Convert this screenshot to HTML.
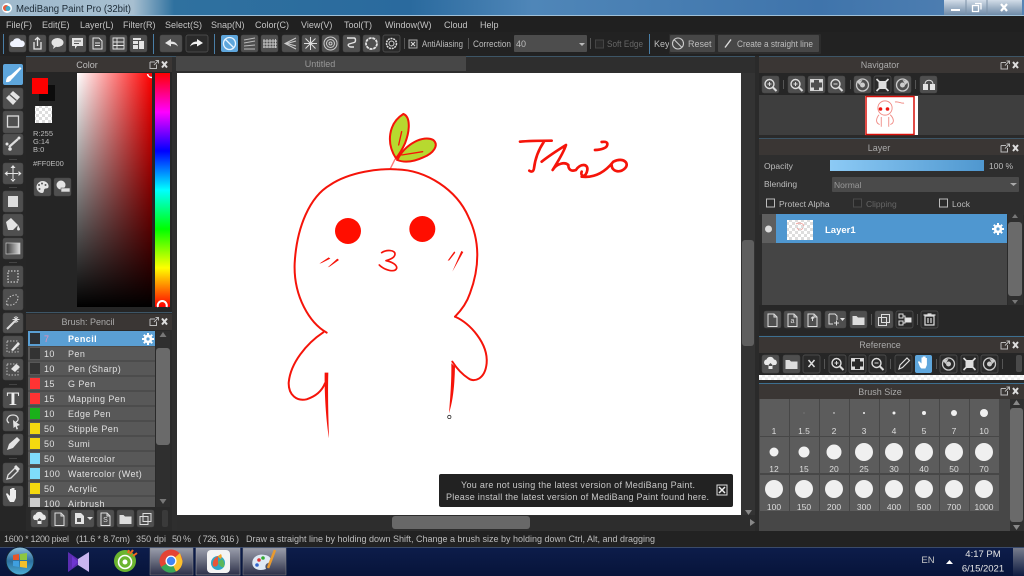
<!DOCTYPE html>
<html><head><meta charset="utf-8"><style>
html,body{margin:0;padding:0;background:#222;width:1024px;height:576px;overflow:hidden}
svg{display:block}
text{font-family:"Liberation Sans",sans-serif;font-size:9px;fill:#bdbdbd}
.m{text-anchor:middle}
.b{fill:#4f4f4f;stroke:#444;stroke-width:.5}
.d{fill:#2a2a2a;stroke:#555;stroke-width:.7}
.h{fill:#3a3634}
.i{fill:#e4e4e4}
.s{fill:none;stroke:#e4e4e4;stroke-width:1.4}
.sep{stroke:#555;stroke-width:1}
.bl{stroke:#4a7ea6;stroke-width:1}
.r{fill:none;stroke:#f5140a;stroke-width:6;stroke-linecap:round;stroke-linejoin:round}
.t{fill:#f5140a}
.row{fill:#585858}
.cell{fill:#5c5c5c}
.n{fill:#ddd;font-size:8.5px;text-anchor:middle}
.mn{font-size:9px;fill:#c4c4c4}
</style></head><body>
<svg width="1024" height="576" viewBox="0 0 1024 576" xmlns="http://www.w3.org/2000/svg">
<defs>
<linearGradient id="tb" x1="0" x2="1" y1="0" y2="0"><stop offset="0" stop-color="#9fb9cc"/><stop offset=".13" stop-color="#a7bfd0"/><stop offset=".17" stop-color="#2f719f"/><stop offset=".4" stop-color="#2a6a9e"/><stop offset=".52" stop-color="#4f86b8"/><stop offset=".8" stop-color="#3f74ab"/><stop offset="1" stop-color="#5583b4"/></linearGradient>
<linearGradient id="sv" x1="0" x2="1" y1="0" y2="0"><stop offset="0" stop-color="#fff"/><stop offset="1" stop-color="#f00"/></linearGradient>
<linearGradient id="sk" x1="0" x2="0" y1="0" y2="1"><stop offset="0" stop-color="#000" stop-opacity="0"/><stop offset="1" stop-color="#000"/></linearGradient>
<linearGradient id="hue" x1="0" x2="0" y1="0" y2="1"><stop offset="0" stop-color="#f00"/><stop offset=".167" stop-color="#f0f"/><stop offset=".333" stop-color="#00f"/><stop offset=".5" stop-color="#0ff"/><stop offset=".667" stop-color="#0f0"/><stop offset=".833" stop-color="#ff0"/><stop offset="1" stop-color="#f00"/></linearGradient>
<linearGradient id="op" x1="0" x2="1" y1="0" y2="0"><stop offset="0" stop-color="#8ccaf5"/><stop offset="1" stop-color="#4f97cf"/></linearGradient>
<linearGradient id="gr" x1="0" x2="1" y1="0" y2="0"><stop offset="0" stop-color="#333"/><stop offset="1" stop-color="#ddd"/></linearGradient>
<linearGradient id="task" x1="0" x2="0" y1="0" y2="1"><stop offset="0" stop-color="#0d1d4b"/><stop offset="1" stop-color="#07143a"/></linearGradient>
<linearGradient id="tbtn" x1="0" x2="0" y1="0" y2="1"><stop offset="0" stop-color="#9a9dab"/><stop offset=".5" stop-color="#666a7c"/><stop offset="1" stop-color="#2c2f48"/></linearGradient>
<linearGradient id="wbtn" x1="0" x2="0" y1="0" y2="1"><stop offset="0" stop-color="#d2dde8"/><stop offset=".5" stop-color="#9fb2c6"/><stop offset="1" stop-color="#6f8ba8"/></linearGradient>
<linearGradient id="orb" x1="0" x2="0" y1="0" y2="1"><stop offset="0" stop-color="#8fc0dd"/><stop offset=".5" stop-color="#2c6f9e"/><stop offset="1" stop-color="#4db0d8"/></linearGradient>
<linearGradient id="sd" x1="0" x2="0" y1="0" y2="1"><stop offset="0" stop-color="#777c8c"/><stop offset="1" stop-color="#0d1a40"/></linearGradient>
<pattern id="chk" width="6" height="6" patternUnits="userSpaceOnUse"><rect width="6" height="6" fill="#fff"/><rect width="3" height="3" fill="#ddd"/><rect x="3" y="3" width="3" height="3" fill="#ddd"/></pattern>
<pattern id="chk2" width="6" height="5" patternUnits="userSpaceOnUse"><rect width="6" height="5" fill="#fff"/><rect width="3" height="2.500" fill="#eee"/><rect x="3" y="2.500" width="3" height="2.500" fill="#eee"/></pattern>
<clipPath id="listclip"><rect x="28" y="331" width="127" height="176"/></clipPath>
<symbol id="pop" viewBox="0 0 20 10" width="20" height="10"><path d="M1 2.500h5M1 2.500v6.500h6.500v-4M5 5.500L9 1.500M6.500 1h3v3" fill="none" stroke="#bbb" stroke-width="1"/><path d="M13 2l5 6M18 2l-5 6" stroke="#ddd" stroke-width="2"/></symbol>
<symbol id="zi" viewBox="0 0 18 18" width="18" height="18"><circle cx="8" cy="8" r="4.500" fill="none" stroke="#ddd" stroke-width="1.400"/><path d="M11 11l4 4" stroke="#ddd" stroke-width="2"/><path d="M6 8h4M8 6v4" stroke="#ddd"/></symbol>
<symbol id="zo" viewBox="0 0 18 18" width="18" height="18"><circle cx="8" cy="8" r="4.500" fill="none" stroke="#ddd" stroke-width="1.400"/><path d="M11 11l4 4" stroke="#ddd" stroke-width="2"/><path d="M6 8h4" stroke="#ddd"/></symbol>
<symbol id="fit" viewBox="0 0 18 18" width="18" height="18"><rect x="3" y="3.500" width="12" height="11" fill="none" stroke="#ccc"/><path d="M3 3.500h3.500v3H3zM11.500 3.500H15v3h-3.500zM3 11.500h3.500v3H3zM11.500 11.500H15v3h-3.500z" fill="#ddd"/></symbol>
<symbol id="rl" viewBox="0 0 18 18" width="18" height="18"><circle cx="9" cy="9" r="6" fill="none" stroke="#ccc" stroke-width="1.300"/><circle cx="9" cy="9" r="2.500" fill="#ccc"/><path d="M3 5l3 4 3-5z" fill="#ccc"/></symbol>
<symbol id="rr" viewBox="0 0 18 18" width="18" height="18"><circle cx="9" cy="9" r="6" fill="none" stroke="#ccc" stroke-width="1.300"/><circle cx="9" cy="9" r="2.500" fill="#ccc"/><path d="M15 5l-3 4-3-5z" fill="#ccc"/></symbol>
<symbol id="fr" viewBox="0 0 18 18" width="18" height="18"><rect x="5" y="5" width="8" height="8" fill="#ddd"/><path d="M3 3l3 3M15 3l-3 3M3 15l3-3M15 15l-3-3" stroke="#ddd" stroke-width="1.600"/></symbol>
<symbol id="doc" viewBox="0 0 18 18" width="18" height="18"><path d="M4.500 3h6l3 3v9.500h-9z" fill="none" stroke="#ddd" stroke-width="1"/><path d="M10.500 3v3h3" fill="none" stroke="#ddd"/></symbol>
<symbol id="fold" viewBox="0 0 18 18" width="18" height="18"><path d="M3 5h4l1.500 1.500H15V14H3z" fill="#ddd"/></symbol>
<symbol id="cp" viewBox="0 0 18 18" width="18" height="18"><path d="M6.500 3.500h8v8h-8zM3.500 6.500h8v8h-8z" fill="none" stroke="#ddd"/></symbol>
<symbol id="cl" viewBox="0 0 18 18" width="18" height="18"><path d="M4 10a3 3 0 0 1 1-5.500 4 4 0 0 1 7.500 0 3 3 0 0 1 1.500 5.500h-3v4H7v-4zM9 8l-3 3h6z" fill="#e8e8e8"/></symbol>
<symbol id="gear" viewBox="0 0 14 14" width="14" height="14"><circle cx="7" cy="7" r="4.200" fill="#fff"/><path d="M7 1v12M1 7h12M2.800 2.800l8.400 8.400M11.200 2.800l-8.400 8.400" stroke="#fff" stroke-width="2"/><circle cx="7" cy="7" r="1.600" fill="#5a9fd4"/></symbol>
</defs>

<rect width="1024" height="576" fill="#242424"/>

<!-- title bar -->
<rect width="1024" height="15" fill="url(#tb)"/>
<rect y="15" width="1024" height="1" fill="#9fc0d8"/>
<circle cx="7" cy="8" r="5" fill="#fff"/><circle cx="6" cy="8" r="3" fill="#e85a3a"/><circle cx="8" cy="8.500" r="2.500" fill="#3fa9c9"/>
<text x="16" y="12" textLength="115" lengthAdjust="spacingAndGlyphs" style="font-size:10px;fill:#1c2a36">MediBang Paint Pro (32bit)</text>
<rect x="944" y="0" width="78" height="15" fill="url(#wbtn)"/>
<path d="M966 0v15M987 0v15" stroke="#7d92a8"/>
<rect x="951" y="9" width="9" height="2" fill="#fff"/>
<path d="M972.500 5.500h6v6h-6zM975 3.500h6v6" fill="none" stroke="#fff" stroke-width="1.300"/>
<path d="M1001 4l6 7M1007 4l-6 7" stroke="#fff" stroke-width="2.200"/>

<!-- menu -->
<rect y="16" width="1024" height="16" fill="#202020"/>
<text class="mn" x="6" y="28">File(F)</text><text class="mn" x="42" y="28">Edit(E)</text><text class="mn" x="80" y="28">Layer(L)</text><text class="mn" x="123" y="28">Filter(R)</text><text class="mn" x="165" y="28">Select(S)</text><text class="mn" x="211" y="28">Snap(N)</text><text class="mn" x="255" y="28">Color(C)</text><text class="mn" x="301" y="28">View(V)</text><text class="mn" x="344" y="28">Tool(T)</text><text class="mn" x="385" y="28">Window(W)</text><text class="mn" x="444" y="28">Cloud</text><text class="mn" x="480" y="28">Help</text>

<!-- toolbar -->
<rect y="32" width="1024" height="24" fill="#222"/>
<path class="bl" d="M3.500 34v20M153.500 34v20M214.500 34v20M649.500 34v20"/>
<rect class="b" x="9" y="35" width="17" height="17" rx="2"/><path d="M13 47a3 3 0 0 1 0-6 4.500 4.500 0 0 1 8-.5 3.200 3.200 0 0 1 1 6.500z" fill="#f0f4ff"/>
<rect class="b" x="29" y="35" width="17" height="17" rx="2"/><path d="M34 42v7h7v-7M37.500 46v-8M35 40l2.500-2.500L40 40" fill="none" stroke="#e4e4e4" stroke-width="1.300"/>
<rect class="b" x="49" y="35" width="17" height="17" rx="2"/><ellipse cx="57.500" cy="42.500" rx="6" ry="4.500" class="i"/><path d="M54 45l-1 4 4-3z" class="i"/>
<rect class="b" x="69" y="35" width="17" height="17" rx="2"/><path d="M72 38h11v8h-6l-2 3v-3h-3z" class="i"/><path d="M74 41h7M74 43.500h5" stroke="#555"/>
<rect class="b" x="89" y="35" width="17" height="17" rx="2"/><path d="M93 38h6l3 3v8h-9zM95 43h5M95 45.500h5" class="s" style="stroke-width:1"/>
<rect class="b" x="110" y="35" width="17" height="17" rx="2"/><path d="M113 38h11v11h-11zM113 42h11M113 45.500h11M117 38v11" class="s" style="stroke-width:.9"/>
<rect class="b" x="130" y="35" width="17" height="17" rx="2"/><path d="M133 41h5v3h-5zM133 45h5v4h-5zM139 41h5v8h-5zM133 38h8v2h-8z" class="i"/>
<rect class="b" x="160" y="35" width="22" height="17" rx="2"/><path d="M165 43l6-4v2.500c4 0 6 2 7 5-2-2-4-2.500-7-2.500v2.500z" class="i"/>
<rect class="d" x="186" y="35" width="22" height="17" rx="2"/><path d="M203 43l-6-4v2.500c-4 0-6 2-7 5 2-2 4-2.500 7-2.500v2.500z" fill="#f2f2f2"/>
<rect x="221" y="35" width="17" height="17" rx="2" fill="#5ea6dc"/><circle cx="229.500" cy="43.500" r="6" fill="none" stroke="#e8f4ff" stroke-width="1.300"/><path d="M225 39l9 9" stroke="#e8f4ff" stroke-width="1.300"/>
<rect class="b" x="241" y="35" width="17" height="17" rx="2"/><path d="M244 40l11-2M244 43l11-2M244 46l11-1M244 49l11 0" stroke="#bbb"/>
<rect class="b" x="261" y="35" width="17" height="17" rx="2"/><path d="M264 39v9M267 39v9M270 39v9M273 39v9M275.500 39v9M263 41h14M263 44h14M263 47h14" stroke="#ccc" stroke-width=".9"/>
<rect class="b" x="282" y="35" width="17" height="17" rx="2"/><path d="M296 38l-11 5.500 11 5.500M296 41l-9 2.500 9 2.500" fill="none" stroke="#ccc"/>
<rect class="b" x="302" y="35" width="17" height="17" rx="2"/><path d="M310.500 37v13M304 43.500h13M305.500 38.500l10 10M315.500 38.500l-10 10" stroke="#ddd"/>
<rect class="b" x="322" y="35" width="17" height="17" rx="2"/><circle cx="330.500" cy="43.500" r="6.500" fill="none" stroke="#ccc"/><circle cx="330.500" cy="43.500" r="4" fill="none" stroke="#ccc"/><circle cx="330.500" cy="43.500" r="1.500" fill="none" stroke="#ccc"/>
<rect class="b" x="343" y="35" width="17" height="17" rx="2"/><path d="M347 38h7c2 0 2 4 0 4.500l-5 1.500c-2 1 0 3 2 3h3" class="s"/>
<rect class="b" x="363" y="35" width="17" height="17" rx="2"/><circle cx="371.500" cy="43.500" r="5.500" fill="none" stroke="#e4e4e4" stroke-width="1.800" stroke-dasharray="3 .8"/>
<rect class="d" x="383" y="35" width="17" height="17" rx="2"/><circle cx="391.500" cy="43.500" r="5" fill="none" stroke="#ddd" stroke-width="1.500" stroke-dasharray="2 .8"/><circle cx="391.500" cy="43.500" r="2.500" fill="none" stroke="#ddd"/>
<path class="sep" d="M404.500 38v11M468.500 38v11M590.500 38v11"/>
<rect x="409" y="40" width="8" height="8" fill="#333" stroke="#aaa"/><path d="M411 42l4 4M415 42l-4 4" stroke="#ddd"/>
<text x="422" y="47" textLength="41" lengthAdjust="spacingAndGlyphs" style="font-size:9px">AntiAliasing</text>
<text x="473" y="47" textLength="38" lengthAdjust="spacingAndGlyphs" style="font-size:9px">Correction</text>
<rect x="514" y="35" width="73" height="17" rx="1" fill="#4d4d4d"/><text x="516" y="47" style="font-size:9px">40</text><path d="M579 43h6l-3 3z" fill="#bbb"/>
<rect x="595.500" y="40" width="8" height="8" fill="#2a2a2a" stroke="#444"/>
<text x="607" y="47" textLength="36" lengthAdjust="spacingAndGlyphs" style="font-size:9px;fill:#666">Soft Edge</text>
<text x="654" y="47" style="font-size:9px">Key</text>
<rect x="669" y="34" width="152" height="20" rx="1" fill="#2c2c2c"/>
<rect x="670" y="35" width="45" height="17" rx="1" fill="#474747"/><circle cx="678" cy="43.500" r="5.500" fill="none" stroke="#ccc" stroke-width="1.100"/><path d="M674 39.500l8 8" stroke="#ccc" stroke-width="1.100"/><text x="688" y="47" style="font-size:9px">Reset</text>
<rect x="718" y="35" width="101" height="17" rx="1" fill="#474747"/><path d="M725 47.500l6-8" stroke="#ddd" stroke-width="1.400"/><text x="737" y="47" textLength="76" lengthAdjust="spacingAndGlyphs" style="font-size:9px">Create a straight line</text>

<!-- workspace -->
<rect x="172" y="56" width="587" height="475" fill="#2e2e2e"/>
<rect x="172" y="56" width="587" height="1" fill="#3d5566"/>
<rect x="176" y="56" width="290" height="15" fill="#474747"/>
<text x="320" y="67" class="m" style="font-size:9px;fill:#999">Untitled</text>
<rect x="177" y="73" width="564" height="442" fill="#fff"/>
<rect x="741" y="73" width="14" height="442" fill="#333"/><rect x="742" y="240" width="12" height="106" rx="3" fill="#5f5f5f"/><path d="M745 510h7l-3.500 5z" fill="#888"/>
<rect x="177" y="515" width="578" height="15" fill="#2d2d2d"/><rect x="392" y="516" width="138" height="13" rx="3" fill="#686868"/><path d="M750 519v7l5-3.500z" fill="#888"/>

<!-- drawing -->
<g transform="translate(280 100) scale(.3333)">
<path d="M348 175C318 130 325 70 370 42C392 50 390 92 375 130C366 150 356 165 348 175Z" fill="#b7d92f" stroke="#f5140a" stroke-width="6"/>
<path d="M352 180C375 132 430 104 460 120C478 136 460 160 430 172C400 186 372 188 352 180Z" fill="#b7d92f" stroke="#f5140a" stroke-width="6"/>
<path class="r" style="stroke-width:4" d="M356 135L365 95M365 165L428 155"/>
<path class="r" style="stroke-width:4;stroke:#f77" d="M345 178L330 208"/>
<path class="r" d="M140 698C90 670 40 590 44 490C50 380 90 290 150 255C210 215 300 205 350 208C440 210 530 270 565 350C600 420 600 500 570 580C560 610 545 630 525 650"/>
<path class="r" d="M525 650C570 670 625 730 620 790C615 840 580 848 565 835C545 822 530 805 517 785"/>
<path class="r" d="M130 697C80 730 30 790 26 850C26 885 50 905 80 898C105 890 125 875 135 850"/>
<path class="t" d="M134 818L145 818C143 880 145 950 147 1015C138 960 133 880 134 818Z"/>
<path class="t" d="M514 790L525 800C524 850 520 900 507 940C511 890 515 840 514 790Z"/>
<circle cx="508" cy="951" r="5" fill="#fff" stroke="#333" stroke-width="2.500"/>
<circle cx="204" cy="393" r="39" fill="#ff0e00"/><circle cx="427" cy="387" r="39" fill="#ff0e00"/>
<path class="r" style="stroke-width:5" d="M305 458C320 448 345 450 345 462C345 475 325 480 318 482C335 485 352 495 350 505C345 518 315 512 298 495"/>
<path class="t" d="M118 491L146 472L151 476L125 489ZM143 502L172 476L177 480L150 499Z"/>
<path class="t" d="M503 482L523 454L526 458L508 481ZM517 515L544 453L550 456L524 503Z"/>
</g>
<g transform="translate(500 120) scale(.3333)">
<path class="r" style="stroke-width:8" d="M60 65C90 62 130 62 155 62M132 65C115 90 105 120 102 145C100 158 92 155 88 152M125 125C150 105 190 80 198 75C190 100 170 130 158 150C170 130 195 125 205 135C205 150 215 155 228 150C240 130 265 130 262 150C258 175 240 170 245 155M245 170C290 175 320 150 340 125C370 110 390 130 375 145C360 160 335 155 335 135M285 90C300 90 325 85 322 70C320 65 312 65 305 66"/>
</g>

<!-- notification -->
<rect x="439" y="474" width="294" height="33" rx="2" fill="#222"/>
<text x="461" y="488" textLength="234" lengthAdjust="spacing" style="font-size:9px;fill:#c8c8c8">You are not using the latest version of MediBang Paint.</text>
<text x="446" y="500" textLength="263" lengthAdjust="spacing" style="font-size:9px;fill:#c8c8c8">Please install the latest version of MediBang Paint found here.</text>
<rect x="717" y="485" width="10" height="10" fill="#222" stroke="#ddd"/><path d="M719 487l6 6M725 487l-6 6" stroke="#eee" stroke-width="1.500"/>

<!-- left tools -->
<rect x="0" y="56" width="26" height="475" fill="#262626"/>
<rect x="3" y="64" width="20" height="21" rx="2" fill="#5ea6dc"/><path d="M6 82c0-3 1-5 3-6l2-1 9-8 1.500 1.500-8 9-2 2c-1 2-3 3-5.500 2.500z" fill="#fff"/>
<rect class="b" x="3" y="88" width="20" height="21" rx="2"/><path d="M6 98l7-7 7 6-7 8z" class="i"/><path d="M9.500 94.500l7 6" stroke="#555" stroke-width="1.200"/>
<rect class="b" x="3" y="111" width="20" height="22" rx="2"/><rect x="7.500" y="116" width="11" height="11" fill="none" stroke="#ddd" stroke-width="1.300"/>
<rect class="b" x="3" y="134" width="20" height="21" rx="2"/><path d="M9 147l9-8" fill="none" stroke="#ddd" stroke-width="2.200"/><circle cx="7" cy="144" r="1.500" class="i"/><circle cx="10" cy="149" r="1.800" class="i"/><circle cx="19" cy="138" r="1.500" class="i"/>
<path d="M9 159.500h8M9 187.500h8M9 262.500h8M9 384.500h8M9 458.500h8" stroke="#444"/>
<rect class="b" x="3" y="163" width="20" height="21" rx="2"/><path d="M13 165l2.500 3h-5zM13 182l2.500-3h-5zM4.500 173.500l3-2.500v5zM21.500 173.500l-3-2.500v5zM7 173h12v1H7zM12.500 167h1v13h-1z" class="i"/>
<rect class="b" x="3" y="191" width="20" height="21" rx="2"/><rect x="8" y="196" width="10" height="11" fill="#ddd"/>
<rect class="b" x="3" y="214" width="20" height="22" rx="2"/><path d="M6 222l5-4 7 7-5 5h-5zM18 225l2 4a1.500 1.500 0 0 1-3 0z" class="i"/>
<rect class="b" x="3" y="238" width="20" height="21" rx="2"/><rect x="6" y="243" width="14" height="11" fill="url(#gr)" stroke="#ccc" stroke-width=".7"/>
<rect class="b" x="3" y="266" width="20" height="21" rx="2"/><rect x="8" y="271" width="10" height="11" fill="none" stroke="#ccc" stroke-width="1.300" stroke-dasharray="1.500 1.500"/>
<rect class="b" x="3" y="289" width="20" height="21" rx="2"/><path d="M7 305c-2-5 4-11 10-10 3 3-1 10-6 10z" fill="none" stroke="#ccc" stroke-width="1" stroke-dasharray="1.500 1.500"/>
<rect class="b" x="3" y="313" width="20" height="20" rx="2"/><path d="M7 329l8-8" stroke="#ddd" stroke-width="2"/><path d="M16 316v7M12.500 319.500h7M14 317l4 5M18 317l-4 5" stroke="#ddd"/>
<rect class="b" x="3" y="336" width="20" height="21" rx="2"/><rect x="7" y="341" width="11" height="11" fill="none" stroke="#bbb" stroke-dasharray="1.500 1.500"/><path d="M11 350l7-8 2 2-7 7z" class="i"/>
<rect class="b" x="3" y="359" width="20" height="21" rx="2"/><rect x="7" y="364" width="11" height="11" fill="none" stroke="#bbb" stroke-dasharray="1.500 1.500"/><path d="M11 369l5-5 4 3-5 5z" class="i"/>
<rect class="b" x="3" y="388" width="20" height="20" rx="2"/><text x="13" y="405" class="m" style="font-family:'Liberation Serif',serif;font-size:19px;font-weight:bold;fill:#eee">T</text>
<rect class="b" x="3" y="411" width="20" height="20" rx="2"/><path d="M9 423c-4-3-1-8 4-8s7 5 3 7" fill="none" stroke="#ddd" stroke-width="1.300"/><path d="M13 420l7 5-3 1 1 3-1.500.5-1-3-2 1.500z" class="i"/>
<rect class="b" x="3" y="434" width="20" height="21" rx="2"/><path d="M7 450l2-6 8-7 3 3-7 8z" class="i"/>
<rect class="b" x="3" y="463" width="20" height="20" rx="2"/><path d="M7 479l1-4 7-7 3 3-7 7z" fill="none" stroke="#ddd" stroke-width="1.300"/><path d="M14 467l2-2 4 4-2 2z" class="i"/>
<rect class="b" x="3" y="486" width="20" height="20" rx="2"/><path d="M8 499l-2-5 1-1 3 3v-7h1.500v5-6h1.500v6-6h1.500v6-4h1.500v8l-2 4h-4z" fill="#eee"/>

<!-- color panel -->
<rect x="26" y="56" width="146" height="256" fill="#252525"/>
<rect x="26" y="56" width="146" height="1" fill="#3d5566"/>
<rect class="h" x="26" y="57" width="146" height="15"/>
<text x="87" y="68" class="m" style="font-size:9px">Color</text>
<use href="#pop" x="149" y="59.500"/>
<rect x="39" y="85" width="16" height="16" fill="#0c0c0c"/>
<rect x="32" y="78" width="16" height="16" fill="#f00"/>
<rect x="35" y="106" width="17" height="17" fill="url(#chk)"/>
<text x="33" y="136" style="font-size:7.500px">R:255</text><text x="33" y="144" style="font-size:7.500px">G:14</text><text x="33" y="152" style="font-size:7.500px">B:0</text>
<text x="33" y="166" style="font-size:7.500px">#FF0E00</text>
<rect class="b" x="34" y="178" width="17" height="18" rx="2"/><path d="M42.500 181c4 0 6.500 3 6 6-.5 2-3 1-4 2s0 4-2.500 4c-3 0-5.500-3-5.500-6s3-6 6-6z" class="i"/><circle cx="39" cy="185" r="1" fill="#555"/><circle cx="42" cy="183.500" r="1" fill="#555"/><circle cx="45.500" cy="185" r="1" fill="#555"/><circle cx="39.500" cy="189" r="1" fill="#555"/>
<rect class="b" x="54" y="178" width="17" height="18" rx="2"/><circle cx="61" cy="185" r="4.500" class="i"/><rect x="61" y="188" width="9" height="4" fill="#ddd" stroke="#555" stroke-width=".6"/>
<rect x="77" y="73" width="75" height="234" fill="url(#sv)"/>
<rect x="77" y="73" width="75" height="234" fill="url(#sk)"/>
<rect x="155" y="73" width="15" height="234" fill="url(#hue)"/>
<path d="M147.500 74a4.500 4.500 0 0 0 4.500 3.500" fill="none" stroke="#fff" stroke-width="1.500"/>
<path d="M158 307a4.500 4.500 0 1 1 8.500 0" fill="none" stroke="#fff" stroke-width="2"/>

<!-- brush panel -->
<rect x="26" y="312" width="146" height="219" fill="#2a2a2a"/>
<rect x="26" y="312" width="146" height="1" fill="#3d5566"/>
<rect class="h" x="26" y="314" width="146" height="16"/>
<text x="88" y="325" class="m" style="font-size:9px;fill:#aaa">Brush: Pencil</text>
<use href="#pop" x="149" y="316.500"/>
<rect x="28" y="331" width="127" height="176" fill="#3f3f3f"/>
<g clip-path="url(#listclip)">
<rect x="28" y="331" width="127" height="15" fill="#5a9fd4"/>
<rect class="row" x="28" y="346.500" width="127" height="14"/>
<rect class="row" x="28" y="361.500" width="127" height="14"/>
<rect class="row" x="28" y="376.500" width="127" height="14"/>
<rect class="row" x="28" y="391.500" width="127" height="14"/>
<rect class="row" x="28" y="406.500" width="127" height="14"/>
<rect class="row" x="28" y="421.500" width="127" height="14"/>
<rect class="row" x="28" y="436.500" width="127" height="14"/>
<rect class="row" x="28" y="451.500" width="127" height="14"/>
<rect class="row" x="28" y="466.500" width="127" height="14"/>
<rect class="row" x="28" y="481.500" width="127" height="14"/>
<rect class="row" x="28" y="496.500" width="127" height="14"/>
<rect x="30" y="333" width="10" height="11" fill="#2d3136"/>
<rect x="30" y="348" width="10" height="11" fill="#333"/>
<rect x="30" y="363" width="10" height="11" fill="#333"/>
<rect x="30" y="378" width="10" height="11" fill="#f33"/>
<rect x="30" y="393" width="10" height="11" fill="#f33"/>
<rect x="30" y="408" width="10" height="11" fill="#1ab01a"/>
<rect x="30" y="423" width="10" height="11" fill="#f5d90f"/>
<rect x="30" y="438" width="10" height="11" fill="#f5d90f"/>
<rect x="30" y="453" width="10" height="11" fill="#7fdcfb"/>
<rect x="30" y="468" width="10" height="11" fill="#7fdcfb"/>
<rect x="30" y="483" width="10" height="11" fill="#f5d90f"/>
<rect x="30" y="498" width="10" height="11" fill="#ccc"/>
<g style="letter-spacing:.42px">
<text x="44" y="342" style="font-size:9px;fill:#e98fb8">7</text>
<text x="68" y="342" style="font-size:9px;fill:#fff;font-weight:bold">Pencil</text>
<text x="44" y="357" style="font-size:9px;fill:#e0e0e0">10</text><text x="68" y="357" style="font-size:9px;fill:#e0e0e0">Pen</text>
<text x="44" y="372" style="font-size:9px;fill:#e0e0e0">10</text><text x="68" y="372" style="font-size:9px;fill:#e0e0e0">Pen (Sharp)</text>
<text x="44" y="387" style="font-size:9px;fill:#e0e0e0">15</text><text x="68" y="387" style="font-size:9px;fill:#e0e0e0">G Pen</text>
<text x="44" y="402" style="font-size:9px;fill:#e0e0e0">15</text><text x="68" y="402" style="font-size:9px;fill:#e0e0e0">Mapping Pen</text>
<text x="44" y="417" style="font-size:9px;fill:#e0e0e0">10</text><text x="68" y="417" style="font-size:9px;fill:#e0e0e0">Edge Pen</text>
<text x="44" y="432" style="font-size:9px;fill:#e0e0e0">50</text><text x="68" y="432" style="font-size:9px;fill:#e0e0e0">Stipple Pen</text>
<text x="44" y="447" style="font-size:9px;fill:#e0e0e0">50</text><text x="68" y="447" style="font-size:9px;fill:#e0e0e0">Sumi</text>
<text x="44" y="462" style="font-size:9px;fill:#e0e0e0">50</text><text x="68" y="462" style="font-size:9px;fill:#e0e0e0">Watercolor</text>
<text x="44" y="477" style="font-size:9px;fill:#e0e0e0">100</text><text x="68" y="477" style="font-size:9px;fill:#e0e0e0">Watercolor (Wet)</text>
<text x="44" y="492" style="font-size:9px;fill:#e0e0e0">50</text><text x="68" y="492" style="font-size:9px;fill:#e0e0e0">Acrylic</text>
<text x="44" y="507" style="font-size:9px;fill:#e0e0e0">100</text><text x="68" y="507" style="font-size:9px;fill:#e0e0e0">Airbrush</text>
</g>
</g>
<use href="#gear" x="141" y="332"/>
<rect x="156" y="331" width="14" height="176" fill="#2f2f2f"/><rect x="156" y="348" width="14" height="97" rx="3" fill="#6a6a6a"/><path d="M163 332l3.500 5h-7zM163 504l3.500-5h-7z" fill="#777"/>
<rect class="b" x="31" y="510" width="17" height="17" rx="2"/><use href="#cl" x="30.500" y="510"/>
<rect class="b" x="51" y="510" width="17" height="17" rx="2"/><use href="#doc" x="50.500" y="510"/>
<rect class="b" x="71" y="510" width="23" height="17" rx="2"/><path d="M75 513h6l3 3v8h-9z" class="i"/><rect x="77" y="518" width="4" height="4" fill="#555"/><path d="M87 517h6l-3 3z" class="i"/>
<rect class="b" x="97" y="510" width="17" height="17" rx="2"/><use href="#doc" x="96.500" y="510"/><text x="105.500" y="522" class="m" style="font-size:7px;fill:#ddd">S</text>
<rect class="b" x="117" y="510" width="17" height="17" rx="2"/><use href="#fold" x="116.500" y="510"/>
<rect class="b" x="137" y="510" width="17" height="17" rx="2"/><use href="#cp" x="136.500" y="510"/>
<rect x="162" y="510" width="6" height="17" rx="2" fill="#3a3a3a"/>

<!-- right: navigator -->
<rect x="755" y="56" width="269" height="475" fill="#2a2a2a"/>
<rect x="759" y="56" width="265" height="1" fill="#3d5566"/>
<rect class="h" x="759" y="57" width="265" height="16"/>
<text x="880" y="68" class="m" style="font-size:9px;fill:#aaa">Navigator</text>
<use href="#pop" x="1000" y="60"/>
<rect x="759" y="73" width="265" height="22" fill="#262626"/>
<rect class="b" x="762" y="76" width="17" height="17" rx="2"/><use href="#zi" x="761.500" y="76"/>
<path class="sep" d="M783.500 80v9M850.500 80v9M915.500 80v9"/>
<rect class="b" x="788" y="76" width="17" height="17" rx="2"/><use href="#zi" x="787.500" y="76"/>
<rect class="b" x="808" y="76" width="17" height="17" rx="2"/><use href="#fit" x="807.500" y="76"/>
<rect class="b" x="828" y="76" width="17" height="17" rx="2"/><use href="#zo" x="827.500" y="76"/>
<rect class="b" x="854" y="76" width="17" height="17" rx="2"/><use href="#rl" x="853.500" y="76"/>
<rect class="d" x="874" y="76" width="17" height="17" rx="2"/><use href="#fr" x="873.500" y="76"/>
<rect class="b" x="894" y="76" width="17" height="17" rx="2"/><use href="#rr" x="893.500" y="76"/>
<rect class="b" x="920" y="76" width="17" height="17" rx="2"/><path d="M923 84h5v6h-5zM930 84h5v6h-5z" class="i"/><path d="M925 84c0-5 8-5 8 0" fill="none" stroke="#ddd"/>
<rect x="759" y="95" width="265" height="40" fill="#3e3e3e"/>
<rect x="865" y="96" width="53" height="39" fill="#fff"/>
<rect x="866" y="96.500" width="48" height="38" fill="none" stroke="#d9100a" stroke-width="1.500"/>
<g transform="translate(876 99) scale(.075)" fill="none" stroke="#f08a84" stroke-width="12"><circle cx="120" cy="120" r="95"/><path d="M40 210C0 260-10 320 50 340M190 210C240 260 250 320 190 340M70 240v130M170 240v130"/></g>
<circle cx="880.500" cy="109" r="1.800" fill="#ee1510"/><circle cx="887.500" cy="109" r="1.800" fill="#ee1510"/>
<path d="M895 102c3-1 7 2 9 1" stroke="#f08a84" fill="none"/>

<!-- layer -->
<rect x="759" y="138" width="265" height="1" fill="#3d5566"/>
<rect class="h" x="759" y="139" width="265" height="16"/>
<text x="879" y="151" class="m" style="font-size:9px;fill:#aaa">Layer</text>
<use href="#pop" x="1000" y="143"/>
<rect x="759" y="155" width="265" height="60" fill="#2e2e2e"/>
<text x="764" y="169" style="font-size:8.500px">Opacity</text>
<rect x="830" y="160" width="154" height="11" fill="url(#op)"/>
<text x="989" y="169" style="font-size:8.500px">100 %</text>
<text x="764" y="187" style="font-size:8.500px">Blending</text>
<rect x="832" y="177" width="187" height="15" rx="1" fill="#4a4a4a"/>
<text x="834" y="188" style="font-size:8.500px;fill:#999">Normal</text><path d="M1010 183h7l-3.500 3z" fill="#aaa"/>
<rect x="766.500" y="199" width="8" height="8" fill="#2a2a2a" stroke="#bbb"/><text x="779" y="207" style="font-size:8.500px">Protect Alpha</text>
<rect x="853.500" y="199" width="8" height="8" fill="#2a2a2a" stroke="#4a4a4a"/><text x="866" y="207" style="font-size:8.500px;fill:#666">Clipping</text>
<rect x="939.500" y="199" width="8" height="8" fill="#2a2a2a" stroke="#bbb"/><text x="952" y="207" style="font-size:8.500px">Lock</text>
<rect x="762" y="214" width="245" height="91" fill="#454545"/>
<rect x="762" y="214" width="14" height="29" fill="#5e5e5e"/><circle cx="768.500" cy="229" r="3.500" fill="#ddd"/>
<rect x="776" y="214" width="231" height="29" fill="#4f97d0"/>
<rect x="787" y="220" width="26" height="20" fill="url(#chk)"/>
<path d="M796 224c3-2 7-1 8 2M797 228l2 2M803 228l-2 2" stroke="#f19a94" stroke-width=".8" fill="none"/>
<text x="825" y="233" style="font-size:9.500px;font-weight:bold;fill:#fff">Layer1</text>
<use href="#gear" x="991" y="222"/>
<rect x="1008" y="214" width="15" height="91" fill="#2f2f2f"/><rect x="1008" y="222" width="14" height="74" rx="3" fill="#6a6a6a"/><path d="M1015 214l3 4h-6zM1015 304l3-4h-6z" fill="#777"/>

<rect x="759" y="305" width="265" height="30" fill="#272727"/>
<rect class="b" x="764" y="311" width="17" height="17" rx="2"/><use href="#doc" x="763.500" y="311"/>
<rect class="b" x="784" y="311" width="17" height="17" rx="2"/><use href="#doc" x="783.500" y="311"/><text x="792.500" y="323" class="m" style="font-size:7px;fill:#ddd">a</text>
<rect class="b" x="804" y="311" width="17" height="17" rx="2"/><use href="#doc" x="803.500" y="311"/><path d="M812.500 321v-4M811 318.500l1.500-1.500 1.500 1.500" stroke="#ddd" fill="none"/>
<rect class="b" x="825" y="311" width="21" height="17" rx="2"/><path d="M829 314h6l2 2v4M829 314v10h4M834 323h5M836.500 320.500v5" stroke="#ddd" fill="none"/><path d="M840 318h5l-2.500 3z" class="i"/>
<rect class="b" x="850" y="311" width="17" height="17" rx="2"/><use href="#fold" x="849.500" y="311"/>
<path class="sep" d="M871.500 314v11M917.500 314v11"/>
<rect class="b" x="875" y="311" width="18" height="17" rx="2"/><use href="#cp" x="875" y="311"/>
<rect class="d" x="896" y="311" width="17" height="17" rx="2"/><path d="M899 314h4v4h-4zM899 321h4v4h-4zM906 318h5v4h-5zM903 316h2v7h-2" fill="none" stroke="#ddd"/><rect x="906" y="318" width="5" height="4" class="i"/>
<rect class="d" x="921" y="311" width="17" height="17" rx="2"/><path d="M925 316h9v9h-9zM923.500 315h12M927.500 314h4M928 318v5M931 318v5" fill="none" stroke="#ddd" stroke-width="1.200"/>

<!-- reference -->
<rect x="759" y="336" width="265" height="1" fill="#3d6f90"/>
<rect class="h" x="759" y="337" width="265" height="16"/>
<text x="880" y="348" class="m" style="font-size:9px;fill:#aaa">Reference</text>
<use href="#pop" x="1000" y="340"/>
<rect x="759" y="353" width="265" height="22" fill="#262626"/>
<rect class="b" x="762" y="355" width="17" height="18" rx="2"/><use href="#cl" x="761.500" y="355"/>
<rect class="b" x="783" y="355" width="17" height="18" rx="2"/><use href="#fold" x="782.500" y="355"/>
<rect class="d" x="803" y="355" width="17" height="18" rx="2"/><path d="M808.500 360l6 7M814.500 360l-6 7" stroke="#ddd" stroke-width="1.500"/>
<path class="sep" d="M824.500 359v10M890.500 359v10M936.500 359v10M1002.500 359v10"/>
<rect class="d" x="829" y="355" width="17" height="18" rx="2"/><use href="#zi" x="828.500" y="355"/>
<rect class="d" x="849" y="355" width="17" height="18" rx="2"/><use href="#fit" x="848.500" y="355"/>
<rect class="d" x="869" y="355" width="17" height="18" rx="2"/><use href="#zo" x="868.500" y="355"/>
<rect class="d" x="895" y="355" width="17" height="18" rx="2"/><path d="M899 369l1-4 7-7 2.500 2.500-7 7z" fill="none" stroke="#ddd" stroke-width="1.200"/>
<rect x="915" y="355" width="17" height="18" rx="2" fill="#5ea6dc"/><path d="M920 367l-2-5 1-1 2.500 2.500v-6h1.300v4-5h1.400v5-5h1.400v5-3.500h1.300v7l-1.500 3.500h-4z" fill="#fff"/>
<rect class="d" x="940" y="355" width="17" height="18" rx="2"/><use href="#rl" x="939.500" y="355"/>
<rect class="d" x="961" y="355" width="17" height="18" rx="2"/><use href="#fr" x="960.500" y="355"/>
<rect class="d" x="981" y="355" width="17" height="18" rx="2"/><use href="#rr" x="980.500" y="355"/>
<rect x="1016" y="355" width="6" height="17" rx="2" fill="#4a4a4a"/>
<rect x="759" y="375" width="265" height="5" fill="url(#chk2)"/>

<!-- brush size -->
<rect x="759" y="383" width="265" height="1" fill="#3d6f90"/>
<rect class="h" x="759" y="384" width="265" height="15"/>
<text x="880" y="395" class="m" style="font-size:9px;fill:#aaa">Brush Size</text>
<use href="#pop" x="1000" y="386"/>
<rect x="759" y="399" width="265" height="132" fill="#474747"/>
<g>
<rect class="cell" x="760" y="399" width="29" height="37"/><rect class="cell" x="790" y="399" width="29" height="37"/><rect class="cell" x="820" y="399" width="29" height="37"/><rect class="cell" x="850" y="399" width="29" height="37"/><rect class="cell" x="880" y="399" width="29" height="37"/><rect class="cell" x="910" y="399" width="29" height="37"/><rect class="cell" x="940" y="399" width="29" height="37"/><rect class="cell" x="970" y="399" width="29" height="37"/>
<rect class="cell" x="760" y="437" width="29" height="36"/><rect class="cell" x="790" y="437" width="29" height="36"/><rect class="cell" x="820" y="437" width="29" height="36"/><rect class="cell" x="850" y="437" width="29" height="36"/><rect class="cell" x="880" y="437" width="29" height="36"/><rect class="cell" x="910" y="437" width="29" height="36"/><rect class="cell" x="940" y="437" width="29" height="36"/><rect class="cell" x="970" y="437" width="29" height="36"/>
<rect class="cell" x="760" y="475" width="29" height="36"/><rect class="cell" x="790" y="475" width="29" height="36"/><rect class="cell" x="820" y="475" width="29" height="36"/><rect class="cell" x="850" y="475" width="29" height="36"/><rect class="cell" x="880" y="475" width="29" height="36"/><rect class="cell" x="910" y="475" width="29" height="36"/><rect class="cell" x="940" y="475" width="29" height="36"/><rect class="cell" x="970" y="475" width="29" height="36"/>
</g>
<g fill="#f0f0f0">
<circle cx="804" cy="413" r=".5" fill="#999"/><circle cx="834" cy="413" r=".7"/><circle cx="864" cy="413" r="1"/><circle cx="894" cy="413" r="1.500"/><circle cx="924" cy="413" r="2"/><circle cx="954" cy="413" r="3"/><circle cx="984" cy="413" r="4"/>
<circle cx="774" cy="452" r="4.500"/><circle cx="804" cy="452" r="5.500"/><circle cx="834" cy="452" r="7.500"/><circle cx="864" cy="452" r="9"/><circle cx="894" cy="452" r="9"/><circle cx="924" cy="452" r="9"/><circle cx="954" cy="452" r="9"/><circle cx="984" cy="452" r="9"/>
<circle cx="774" cy="489" r="9"/><circle cx="804" cy="489" r="9"/><circle cx="834" cy="489" r="9"/><circle cx="864" cy="489" r="9"/><circle cx="894" cy="489" r="9"/><circle cx="924" cy="489" r="9"/><circle cx="954" cy="489" r="9"/><circle cx="984" cy="489" r="9"/>
</g>
<text class="n" x="774" y="434">1</text><text class="n" x="804" y="434">1.5</text><text class="n" x="834" y="434">2</text><text class="n" x="864" y="434">3</text><text class="n" x="894" y="434">4</text><text class="n" x="924" y="434">5</text><text class="n" x="954" y="434">7</text><text class="n" x="984" y="434">10</text>
<text class="n" x="774" y="472">12</text><text class="n" x="804" y="472">15</text><text class="n" x="834" y="472">20</text><text class="n" x="864" y="472">25</text><text class="n" x="894" y="472">30</text><text class="n" x="924" y="472">40</text><text class="n" x="954" y="472">50</text><text class="n" x="984" y="472">70</text>
<text class="n" x="774" y="510">100</text><text class="n" x="804" y="510">150</text><text class="n" x="834" y="510">200</text><text class="n" x="864" y="510">300</text><text class="n" x="894" y="510">400</text><text class="n" x="924" y="510">500</text><text class="n" x="954" y="510">700</text><text class="n" x="984" y="510">1000</text>
<rect x="1010" y="399" width="14" height="132" fill="#2f2f2f"/><rect x="1010" y="408" width="13" height="114" rx="3" fill="#6a6a6a"/><path d="M1016.500 400l3.500 5h-7zM1016.500 530l3.500-5h-7z" fill="#888"/>

<!-- status -->
<rect y="531" width="1024" height="16" fill="#222"/>
<text x="4" y="542" style="font-size:9px" textLength="65" lengthAdjust="spacing">1600 * 1200 pixel</text><text x="76" y="542" style="font-size:9px" textLength="54" lengthAdjust="spacing">(11.6 * 8.7cm)</text><text x="136" y="542" style="font-size:9px" textLength="30" lengthAdjust="spacing">350 dpi</text><text x="172" y="542" style="font-size:9px" textLength="19" lengthAdjust="spacing">50 %</text><text x="198" y="542" style="font-size:9px" textLength="41" lengthAdjust="spacing">( 726, 916 )</text><text x="246" y="542" style="font-size:9px" textLength="409" lengthAdjust="spacing">Draw a straight line by holding down Shift, Change a brush size by holding down Ctrl, Alt, and dragging</text>

<!-- taskbar -->
<rect y="547" width="1024" height="29" fill="url(#task)"/>
<rect y="547" width="1024" height="1" fill="#3a4a6a"/>
<circle cx="20" cy="561" r="14" fill="url(#orb)" stroke="#123"/>
<path d="M13 555l6-1v6h-6z" fill="#e8562a"/><path d="M20 554l7-1v7h-7z" fill="#8dc63f"/><path d="M13 561h6v6l-6-1z" fill="#3f9fe0"/><path d="M20 561h7v7l-7-1z" fill="#f4c02a"/>
<path d="M68 552l10 7v6l-10 7z" fill="#5b2db0"/><path d="M89 552v20l-11-7v-6z" fill="#c9b5f0"/><path d="M72 556l6 6-6 6z" fill="#6d35d0"/>
<circle cx="125" cy="561" r="11" fill="#6bb52f"/><circle cx="125" cy="562" r="6.500" fill="none" stroke="#fff" stroke-width="1.600"/><circle cx="125" cy="562" r="2.500" fill="#fff"/><path d="M130 554l3-4M133 556l4-3M128 553l1-3" stroke="#f06a20" stroke-width="2"/>
<rect x="150" y="548" width="43" height="27" fill="url(#tbtn)" stroke="#888" stroke-width=".5"/>
<rect x="196" y="548" width="44" height="27" fill="url(#tbtn)" stroke="#aaa" stroke-width=".5"/>
<rect x="243" y="548" width="43" height="27" fill="url(#tbtn)" stroke="#888" stroke-width=".5"/>
<circle cx="171" cy="561" r="11.500" fill="#e44434"/><path d="M171 561L161 567A11.500 11.500 0 0 0 176 571.500z" fill="#3aa757"/><path d="M171 561L176 571.500A11.500 11.500 0 0 0 182.500 561L180 553z" fill="#fbc02d"/><circle cx="171" cy="561" r="5.500" fill="#fff"/><circle cx="171" cy="561" r="4.200" fill="#4285f4"/>
<rect x="207" y="550" width="23" height="23" rx="4" fill="#f4f4f4"/><circle cx="218" cy="563" r="7" fill="#2fa7c7"/><path d="M218 556c-4 2-6 6-5 10 3 2 6-1 5-4z" fill="#e9553a"/><path d="M218 562c1 3 3 6 6 5 1-3 0-6-2-8z" fill="#5cb85c"/><path d="M221 554c1 2 1 3 0 5-2-1-3-2-3-3z" fill="#f4a62a"/>
<path d="M253 566c-3-7 4-13 12-11 7 1 7 7 3 8-3 1-3 4-2 6-5 2-11 1-13-3z" fill="#dfeaf5"/><circle cx="259" cy="560" r="1.800" fill="#d33"/><circle cx="263" cy="558" r="1.800" fill="#3a3"/><circle cx="257" cy="565" r="1.800" fill="#36c"/><path d="M275 550l-7 18" stroke="#e89a30" stroke-width="2.500"/>
<text x="928" y="563" class="m" style="font-size:9.500px;fill:#c8c8c8">EN</text>
<path d="M946 564l3.500-4 3.500 4z" fill="#fff"/>
<text x="983" y="557" class="m" style="font-size:9.500px;fill:#e6e6e6">4:17 PM</text>
<text x="983" y="571.500" class="m" style="font-size:9.500px;fill:#e6e6e6">6/15/2021</text>
<rect x="1013" y="548" width="11" height="28" fill="url(#sd)"/>
</svg>
</body></html>
